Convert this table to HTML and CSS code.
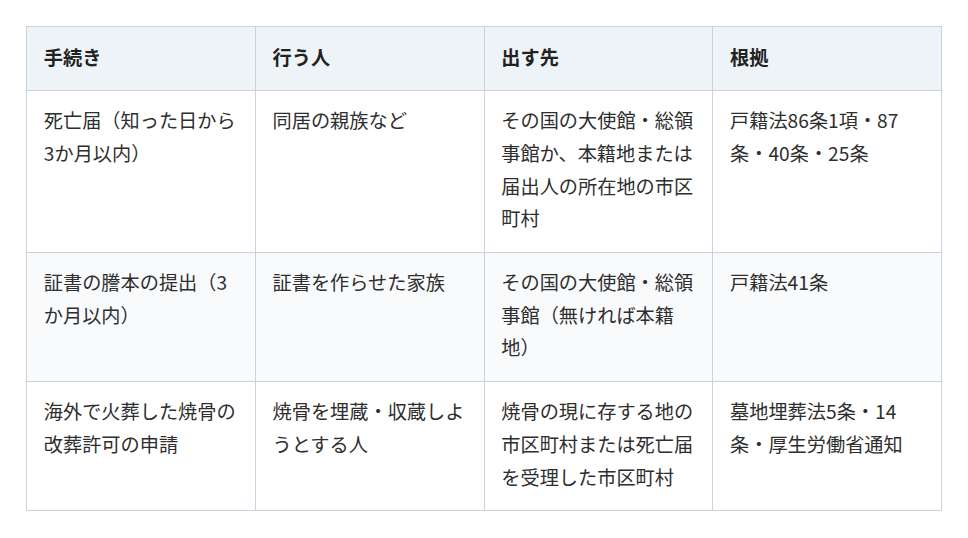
FILE: index.html
```html
<!DOCTYPE html>
<html lang="ja">
<head>
<meta charset="utf-8">
<title>手続き一覧</title>
<link rel="stylesheet" href="styles.css">
</head>
<body>
<div class="wrap">
<table class="proc">
<thead>
<tr><th>手続き</th><th>行う人</th><th>出す先</th><th>根拠</th></tr>
</thead>
<tbody>
<tr>
<td>死亡届（知った日から3か月以内）</td>
<td>同居の親族など</td>
<td>その国の大使館・総領事館か、本籍地または届出人の所在地の市区町村</td>
<td>戸籍法86条1項・87条・40条・25条</td>
</tr>
<tr class="alt">
<td>証書の謄本の提出（3か月以内）</td>
<td>証書を作らせた家族</td>
<td>その国の大使館・総領事館（無ければ本籍地）</td>
<td>戸籍法41条</td>
</tr>
<tr>
<td>海外で火葬した焼骨の改葬許可の申請</td>
<td>焼骨を埋蔵・収蔵しようとする人</td>
<td>焼骨の現に存する地の市区町村または死亡届を受理した市区町村</td>
<td>墓地埋葬法5条・14条・厚生労働省通知</td>
</tr>
</tbody>
</table>
</div>
</body>
</html>
```
FILE: styles.css
```css
html, body {
  margin: 0;
  padding: 0;
  background: #ffffff;
}
.wrap {
  padding: 26px;
}
.proc {
  width: 916px;
  table-layout: fixed;
  border-collapse: collapse;
  font-family: "Noto Sans CJK JP", "Noto Sans", sans-serif;
  font-size: 19.2px;
  line-height: 32.6px;
  color: #2e2e2e;
}
.proc th, .proc td {
  border: 1px solid #c8d1dc;
  padding: 13.4px 16.8px 17px;
  text-align: left;
  vertical-align: top;
  width: 25%;
}
.proc th {
  padding-top: 14.4px;
  padding-bottom: 16px;
  background: #eef3f8;
  color: #222222;
  font-weight: 700;
}
.proc tr.alt td {
  background: #f8fafc;
}
```
